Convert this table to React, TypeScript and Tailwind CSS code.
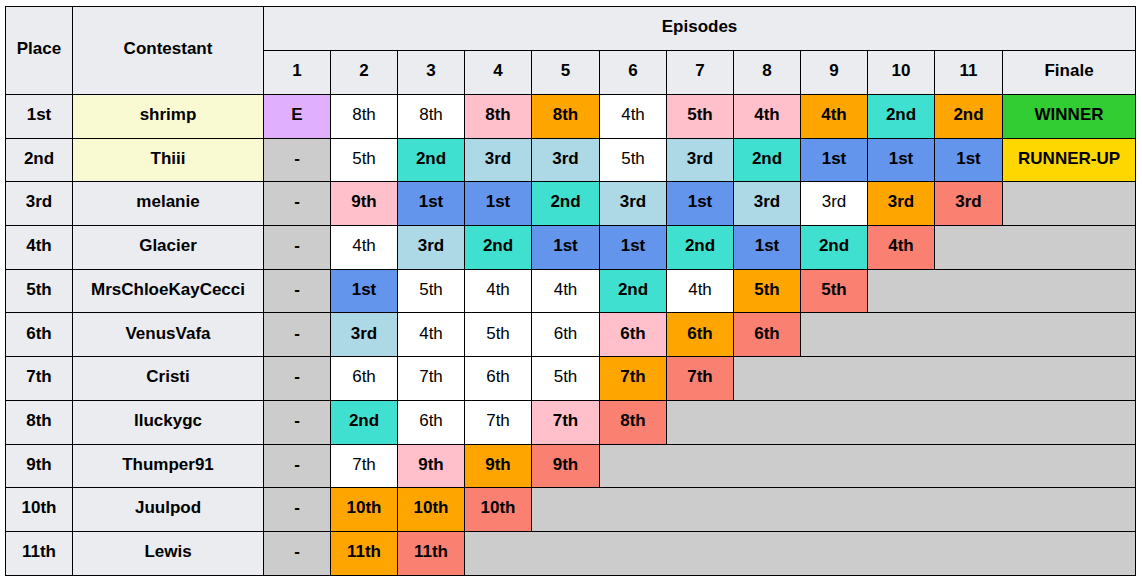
const C: Record<string, string> = {
  w: 'bg-white font-normal',
  p: 'bg-[#ffc0cb] font-bold',
  o: 'bg-[#ffa500] font-bold',
  t: 'bg-[#40e0d0] font-bold',
  l: 'bg-[#add8e6] font-bold',
  b: 'bg-[#6495ed] font-bold',
  s: 'bg-[#fa8072] font-bold',
  g: 'bg-[#cccccc] font-bold',
  e: 'bg-[#e0b0ff] font-bold',
  win: 'bg-[#32cd32] font-bold',
  run: 'bg-[#ffd700] font-bold',
};

type Cell = [string, string];

const rows: { place: string; name: string; hl?: boolean; cells: Cell[] }[] = [
  {
    place: '1st', name: 'shrimp', hl: true,
    cells: [['E', 'e'], ['8th', 'w'], ['8th', 'w'], ['8th', 'p'], ['8th', 'o'], ['4th', 'w'], ['5th', 'p'], ['4th', 'p'], ['4th', 'o'], ['2nd', 't'], ['2nd', 'o'], ['WINNER', 'win']],
  },
  {
    place: '2nd', name: 'Thiii', hl: true,
    cells: [['-', 'g'], ['5th', 'w'], ['2nd', 't'], ['3rd', 'l'], ['3rd', 'l'], ['5th', 'w'], ['3rd', 'l'], ['2nd', 't'], ['1st', 'b'], ['1st', 'b'], ['1st', 'b'], ['RUNNER-UP', 'run']],
  },
  {
    place: '3rd', name: 'melanie',
    cells: [['-', 'g'], ['9th', 'p'], ['1st', 'b'], ['1st', 'b'], ['2nd', 't'], ['3rd', 'l'], ['1st', 'b'], ['3rd', 'l'], ['3rd', 'w'], ['3rd', 'o'], ['3rd', 's']],
  },
  {
    place: '4th', name: 'Glacier',
    cells: [['-', 'g'], ['4th', 'w'], ['3rd', 'l'], ['2nd', 't'], ['1st', 'b'], ['1st', 'b'], ['2nd', 't'], ['1st', 'b'], ['2nd', 't'], ['4th', 's']],
  },
  {
    place: '5th', name: 'MrsChloeKayCecci',
    cells: [['-', 'g'], ['1st', 'b'], ['5th', 'w'], ['4th', 'w'], ['4th', 'w'], ['2nd', 't'], ['4th', 'w'], ['5th', 'o'], ['5th', 's']],
  },
  {
    place: '6th', name: 'VenusVafa',
    cells: [['-', 'g'], ['3rd', 'l'], ['4th', 'w'], ['5th', 'w'], ['6th', 'w'], ['6th', 'p'], ['6th', 'o'], ['6th', 's']],
  },
  {
    place: '7th', name: 'Cristi',
    cells: [['-', 'g'], ['6th', 'w'], ['7th', 'w'], ['6th', 'w'], ['5th', 'w'], ['7th', 'o'], ['7th', 's']],
  },
  {
    place: '8th', name: 'lluckygc',
    cells: [['-', 'g'], ['2nd', 't'], ['6th', 'w'], ['7th', 'w'], ['7th', 'p'], ['8th', 's']],
  },
  {
    place: '9th', name: 'Thumper91',
    cells: [['-', 'g'], ['7th', 'w'], ['9th', 'p'], ['9th', 'o'], ['9th', 's']],
  },
  {
    place: '10th', name: 'Juulpod',
    cells: [['-', 'g'], ['10th', 'o'], ['10th', 'o'], ['10th', 's']],
  },
  {
    place: '11th', name: 'Lewis',
    cells: [['-', 'g'], ['11th', 'o'], ['11th', 's']],
  },
];

const episodes = ['1', '2', '3', '4', '5', '6', '7', '8', '9', '10', '11'];
const epWidths = [67, 67, 67, 67, 68, 67, 67, 67, 67, 67, 68];

// shared cell look: black grid line, text nudged up a touch
const cell = 'border border-black pb-[3px]';

export default function App() {
  return (
    <div className="min-h-screen bg-white pt-[6px] pl-[5px] font-['Liberation_Sans',Arial,sans-serif] text-[17px] text-black">
      <table className="table-fixed border-collapse border border-black text-center w-[1131px]">
        <colgroup>
          <col className="w-[67px]" />
          <col className="w-[191px]" />
          {epWidths.map((w, i) => (
            <col key={i} style={{ width: w }} />
          ))}
          <col className="w-[133px]" />
        </colgroup>
        <thead>
          <tr className="h-[44px]">
            <th rowSpan={2} className={`${cell} bg-[#eaecf0] font-bold`}>Place</th>
            <th rowSpan={2} className={`${cell} bg-[#eaecf0] font-bold`}>Contestant</th>
            <th colSpan={12} className={`${cell} bg-[#eaecf0] font-bold`}>Episodes</th>
          </tr>
          <tr className="h-[44px]">
            {episodes.map((e) => (
              <th key={e} className={`${cell} bg-[#eaecf0] font-bold`}>{e}</th>
            ))}
            <th className={`${cell} bg-[#eaecf0] font-bold`}>Finale</th>
          </tr>
        </thead>
        <tbody>
          {rows.map((r) => {
            const filled = r.cells.length;
            return (
              <tr key={r.place} className="h-[43.7px]">
                <td className={`${cell} bg-[#eaecf0] font-bold`}>{r.place}</td>
                <td className={`${cell} font-bold ${r.hl ? 'bg-[#fafad2]' : 'bg-[#eaecf0]'}`}>{r.name}</td>
                {r.cells.map(([v, k], i) => (
                  <td key={i} className={`${cell} ${C[k]}`}>{v}</td>
                ))}
                {filled < 12 && <td colSpan={12 - filled} className={`${cell} bg-[#cccccc]`} />}
              </tr>
            );
          })}
        </tbody>
      </table>
    </div>
  );
}
